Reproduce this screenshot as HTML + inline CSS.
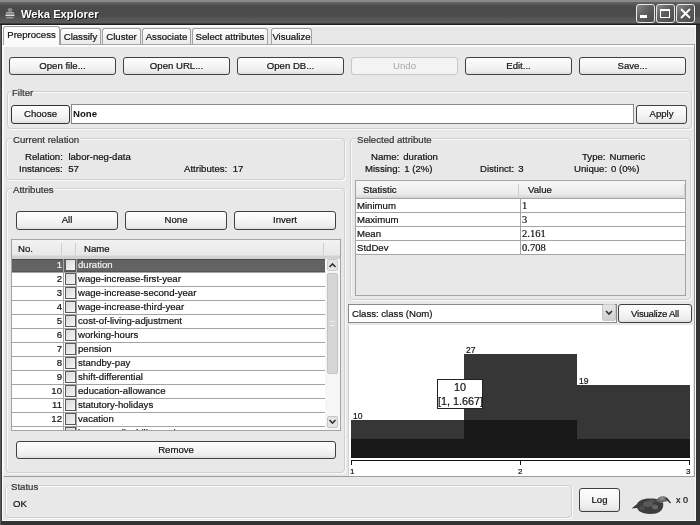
<!DOCTYPE html>
<html><head><meta charset="utf-8"><style>
*{box-sizing:border-box;margin:0;padding:0}
html,body{width:700px;height:525px;overflow:hidden;background:#333}
body{position:relative;font-family:"Liberation Sans",sans-serif;font-size:9.6px;color:#111}
.a{position:absolute;white-space:nowrap}
.btn{position:absolute;border:1px solid #404040;border-radius:3px;background:linear-gradient(#fdfdfd 0,#f5f5f5 50%,#ebebeb 85%,#dedede 100%);text-align:center;line-height:16px;white-space:nowrap}
.btn.dis{border-color:#c8c8c8;color:#a9a9a9;background:#f3f3f3}
.grp{position:absolute;border:1px solid #cfcfcf;border-radius:4px;box-shadow:inset 1px 1px 0 #fafafa,1px 1px 0 #fafafa}
.glbl{position:absolute;background:#e8e8e8;padding:0 1px;color:#333;line-height:11px;white-space:nowrap}
.tab{position:absolute;top:28px;height:16px;border:1px solid #a0a0a0;border-bottom:none;border-radius:3px 3px 0 0;background:linear-gradient(#fdfdfd,#ebebeb);text-align:center;line-height:16px;white-space:nowrap}
.t{-webkit-text-stroke:0.2px currentColor}
</style></head><body><div id="root" style="position:absolute;left:0;top:0;width:700px;height:525px;filter:grayscale(1)">
<div class="a" style="left:0;top:0;width:700px;height:25px;background:linear-gradient(#8a8a8a 0,#8a8a8a 1.5px,#626262 2.5px,#5a5a5a 4px,#4b4b4b 6px,#4b4b4b 15px,#565656 19px,#5c5c5c 23px,#1e1e1e 24px)"></div>
<svg class="a" style="left:5px;top:7px" width="10" height="13"><ellipse cx="5" cy="3" rx="2.5" ry="2" fill="#888"/><rect x="1" y="5.2" width="8" height="1.4" fill="#bbb"/><rect x="0.5" y="7.5" width="9" height="1.6" fill="#ddd"/><rect x="1.5" y="10" width="7" height="1.4" fill="#999"/></svg>
<div class="a" style="left:21px;top:6.5px;font-weight:bold;font-size:11.2px;color:#fff;text-shadow:1px 1px 0 #1a1a1a;line-height:14px">Weka Explorer</div>
<div class="a" style="left:636px;top:4px;width:19px;height:19px;border:1px solid #e8e8e8;border-radius:3px;background:linear-gradient(135deg,#8a8a8a 0,#5e5e5e 45%,#4a4a4a 100%)"></div>
<div class="a" style="left:656px;top:4px;width:19px;height:19px;border:1px solid #e8e8e8;border-radius:3px;background:linear-gradient(135deg,#8a8a8a 0,#5e5e5e 45%,#4a4a4a 100%)"></div>
<div class="a" style="left:676px;top:4px;width:19px;height:19px;border:1px solid #e8e8e8;border-radius:3px;background:linear-gradient(135deg,#8a8a8a 0,#5e5e5e 45%,#4a4a4a 100%)"></div>
<div class="a" style="left:640px;top:15px;width:7px;height:3px;background:#fff"></div>
<div class="a" style="left:660px;top:9px;width:10px;height:9px;border:1.5px solid #fff;border-top-width:2.5px"></div>
<svg class="a" style="left:680px;top:8px" width="11" height="11"><path d="M1 1L10 10M10 1L1 10" stroke="#fff" stroke-width="1.8"/></svg>
<div class="a" style="left:0;top:25px;width:2px;height:500px;background:linear-gradient(90deg,#585858 0,#585858 1px,#383838 1px)"></div>
<div class="a" style="left:2px;top:25px;width:694px;height:496px;background:#e8e8e8;border-left:1px solid #fafafa;border-right:1px solid #fafafa;border-bottom:1px solid #fafafa"></div>
<div class="a" style="left:2px;top:25px;width:694px;height:2px;background:#fafafa"></div>
<div class="a" style="left:3px;top:44px;width:692px;height:433px;border:1px solid #9c9c9c;border-left-color:#f8f8f8;border-top-color:#a8a8a8;background:#e8e8e8;box-shadow:inset 0 2px 0 #fafafa"></div>
<div class="tab t" style="left:60px;width:41px">Classify</div>
<div class="tab t" style="left:102px;width:39px">Cluster</div>
<div class="tab t" style="left:142px;width:49px">Associate</div>
<div class="tab t" style="left:192px;width:76px">Select attributes</div>
<div class="tab t" style="left:271px;width:41px">Visualize</div>
<div class="tab t" style="left:3px;top:26px;width:57px;height:19px;background:#fbfbfb;border-color:#a0a0a0;line-height:16px">Preprocess</div>
<div class="btn t" style="left:9px;top:57px;width:107px;height:18px">Open file...</div>
<div class="btn t" style="left:123px;top:57px;width:107px;height:18px">Open URL...</div>
<div class="btn t" style="left:237px;top:57px;width:107px;height:18px">Open DB...</div>
<div class="btn dis" style="left:351px;top:57px;width:107px;height:18px">Undo</div>
<div class="btn t" style="left:465px;top:57px;width:107px;height:18px">Edit...</div>
<div class="btn t" style="left:579px;top:57px;width:107px;height:18px">Save...</div>
<div class="grp" style="left:7px;top:91px;width:685px;height:38px"></div>
<div class="glbl t" style="left:11px;top:87px">Filter</div>
<div class="btn t" style="left:11px;top:105px;width:59px;height:19px;border-color:#333;line-height:16px">Choose</div>
<div class="a" style="left:71px;top:104px;width:563px;height:20px;background:#fff;border:1px solid #8a8a8a;border-bottom-color:#777;font-weight:bold;padding-left:1px;line-height:18px">None</div>
<div class="btn t" style="left:636px;top:105px;width:51px;height:19px;line-height:16px">Apply</div>
<div class="grp" style="left:6px;top:138px;width:339px;height:42px"></div>
<div class="glbl t" style="left:12px;top:134px">Current relation</div>
<div class="a t" style="left:25px;top:151px">Relation:<span style="display:inline-block;width:5.5px"></span>labor-neg-data</div>
<div class="a t" style="left:19px;top:163px">Instances:<span style="display:inline-block;width:5.5px"></span>57</div>
<div class="a t" style="left:184px;top:163px">Attributes:<span style="display:inline-block;width:5.5px"></span>17</div>
<div class="grp" style="left:6px;top:188px;width:339px;height:285px"></div>
<div class="glbl t" style="left:12px;top:184px">Attributes</div>
<div class="btn t" style="left:16px;top:211px;width:102px;height:19px;line-height:16px">All</div>
<div class="btn t" style="left:125px;top:211px;width:102px;height:19px;line-height:16px">None</div>
<div class="btn t" style="left:234px;top:211px;width:102px;height:19px;line-height:16px">Invert</div>
<div class="a" style="left:11px;top:239px;width:330px;height:192px;border:1px solid #a4a4a4;background:#fff;overflow:hidden"><div class="a" style="left:0;top:0;width:328px;height:19px;background:linear-gradient(#f2f2f2 0,#e8e8e8 15px,#d2d2d2 16px,#d2d2d2 19px)"></div><div class="a" style="left:49px;top:3px;width:1px;height:12px;background:#cfcfcf"></div><div class="a" style="left:63px;top:3px;width:1px;height:12px;background:#cfcfcf"></div><div class="a" style="left:311px;top:3px;width:1px;height:12px;background:#cfcfcf"></div><div class="a t" style="left:6px;top:3px">No.</div><div class="a t" style="left:72px;top:3px">Name</div><div class="a" style="left:0;top:19px;width:313px;height:14px;background:#636363;border-bottom:1px solid #a4a4a4"></div><div class="a" style="left:0;top:19px;width:313px;height:1px;background:#4a4a4a"></div><div class="a" style="left:0;top:31px;width:313px;height:1px;background:#555"></div><div class="a" style="left:51px;top:19px;width:1px;height:14px;background:#a4a4a4"></div><div class="a" style="left:64px;top:19px;width:1px;height:14px;background:#a4a4a4"></div><div class="a t" style="left:20px;top:18px;width:30px;text-align:right;color:#f2f2f2;line-height:13px">1</div><div class="a" style="left:53px;top:19px;width:11px;height:12px;border:1px solid #5a5a5a;background:linear-gradient(135deg,#d8d8d8,#f6f6f6)"></div><div class="a t" style="left:66px;top:18px;color:#f2f2f2;line-height:13px">duration</div><div class="a" style="left:0;top:33px;width:313px;height:14px;background:#fff;border-bottom:1px solid #a4a4a4"></div><div class="a" style="left:51px;top:33px;width:1px;height:14px;background:#a4a4a4"></div><div class="a" style="left:64px;top:33px;width:1px;height:14px;background:#a4a4a4"></div><div class="a t" style="left:20px;top:32px;width:30px;text-align:right;color:#111;line-height:13px">2</div><div class="a" style="left:53px;top:33px;width:11px;height:12px;border:1px solid #5a5a5a;background:linear-gradient(135deg,#d8d8d8,#f6f6f6)"></div><div class="a t" style="left:66px;top:32px;color:#111;line-height:13px">wage-increase-first-year</div><div class="a" style="left:0;top:47px;width:313px;height:14px;background:#fff;border-bottom:1px solid #a4a4a4"></div><div class="a" style="left:51px;top:47px;width:1px;height:14px;background:#a4a4a4"></div><div class="a" style="left:64px;top:47px;width:1px;height:14px;background:#a4a4a4"></div><div class="a t" style="left:20px;top:46px;width:30px;text-align:right;color:#111;line-height:13px">3</div><div class="a" style="left:53px;top:47px;width:11px;height:12px;border:1px solid #5a5a5a;background:linear-gradient(135deg,#d8d8d8,#f6f6f6)"></div><div class="a t" style="left:66px;top:46px;color:#111;line-height:13px">wage-increase-second-year</div><div class="a" style="left:0;top:61px;width:313px;height:14px;background:#fff;border-bottom:1px solid #a4a4a4"></div><div class="a" style="left:51px;top:61px;width:1px;height:14px;background:#a4a4a4"></div><div class="a" style="left:64px;top:61px;width:1px;height:14px;background:#a4a4a4"></div><div class="a t" style="left:20px;top:60px;width:30px;text-align:right;color:#111;line-height:13px">4</div><div class="a" style="left:53px;top:61px;width:11px;height:12px;border:1px solid #5a5a5a;background:linear-gradient(135deg,#d8d8d8,#f6f6f6)"></div><div class="a t" style="left:66px;top:60px;color:#111;line-height:13px">wage-increase-third-year</div><div class="a" style="left:0;top:75px;width:313px;height:14px;background:#fff;border-bottom:1px solid #a4a4a4"></div><div class="a" style="left:51px;top:75px;width:1px;height:14px;background:#a4a4a4"></div><div class="a" style="left:64px;top:75px;width:1px;height:14px;background:#a4a4a4"></div><div class="a t" style="left:20px;top:74px;width:30px;text-align:right;color:#111;line-height:13px">5</div><div class="a" style="left:53px;top:75px;width:11px;height:12px;border:1px solid #5a5a5a;background:linear-gradient(135deg,#d8d8d8,#f6f6f6)"></div><div class="a t" style="left:66px;top:74px;color:#111;line-height:13px">cost-of-living-adjustment</div><div class="a" style="left:0;top:89px;width:313px;height:14px;background:#fff;border-bottom:1px solid #a4a4a4"></div><div class="a" style="left:51px;top:89px;width:1px;height:14px;background:#a4a4a4"></div><div class="a" style="left:64px;top:89px;width:1px;height:14px;background:#a4a4a4"></div><div class="a t" style="left:20px;top:88px;width:30px;text-align:right;color:#111;line-height:13px">6</div><div class="a" style="left:53px;top:89px;width:11px;height:12px;border:1px solid #5a5a5a;background:linear-gradient(135deg,#d8d8d8,#f6f6f6)"></div><div class="a t" style="left:66px;top:88px;color:#111;line-height:13px">working-hours</div><div class="a" style="left:0;top:103px;width:313px;height:14px;background:#fff;border-bottom:1px solid #a4a4a4"></div><div class="a" style="left:51px;top:103px;width:1px;height:14px;background:#a4a4a4"></div><div class="a" style="left:64px;top:103px;width:1px;height:14px;background:#a4a4a4"></div><div class="a t" style="left:20px;top:102px;width:30px;text-align:right;color:#111;line-height:13px">7</div><div class="a" style="left:53px;top:103px;width:11px;height:12px;border:1px solid #5a5a5a;background:linear-gradient(135deg,#d8d8d8,#f6f6f6)"></div><div class="a t" style="left:66px;top:102px;color:#111;line-height:13px">pension</div><div class="a" style="left:0;top:117px;width:313px;height:14px;background:#fff;border-bottom:1px solid #a4a4a4"></div><div class="a" style="left:51px;top:117px;width:1px;height:14px;background:#a4a4a4"></div><div class="a" style="left:64px;top:117px;width:1px;height:14px;background:#a4a4a4"></div><div class="a t" style="left:20px;top:116px;width:30px;text-align:right;color:#111;line-height:13px">8</div><div class="a" style="left:53px;top:117px;width:11px;height:12px;border:1px solid #5a5a5a;background:linear-gradient(135deg,#d8d8d8,#f6f6f6)"></div><div class="a t" style="left:66px;top:116px;color:#111;line-height:13px">standby-pay</div><div class="a" style="left:0;top:131px;width:313px;height:14px;background:#fff;border-bottom:1px solid #a4a4a4"></div><div class="a" style="left:51px;top:131px;width:1px;height:14px;background:#a4a4a4"></div><div class="a" style="left:64px;top:131px;width:1px;height:14px;background:#a4a4a4"></div><div class="a t" style="left:20px;top:130px;width:30px;text-align:right;color:#111;line-height:13px">9</div><div class="a" style="left:53px;top:131px;width:11px;height:12px;border:1px solid #5a5a5a;background:linear-gradient(135deg,#d8d8d8,#f6f6f6)"></div><div class="a t" style="left:66px;top:130px;color:#111;line-height:13px">shift-differential</div><div class="a" style="left:0;top:145px;width:313px;height:14px;background:#fff;border-bottom:1px solid #a4a4a4"></div><div class="a" style="left:51px;top:145px;width:1px;height:14px;background:#a4a4a4"></div><div class="a" style="left:64px;top:145px;width:1px;height:14px;background:#a4a4a4"></div><div class="a t" style="left:20px;top:144px;width:30px;text-align:right;color:#111;line-height:13px">10</div><div class="a" style="left:53px;top:145px;width:11px;height:12px;border:1px solid #5a5a5a;background:linear-gradient(135deg,#d8d8d8,#f6f6f6)"></div><div class="a t" style="left:66px;top:144px;color:#111;line-height:13px">education-allowance</div><div class="a" style="left:0;top:159px;width:313px;height:14px;background:#fff;border-bottom:1px solid #a4a4a4"></div><div class="a" style="left:51px;top:159px;width:1px;height:14px;background:#a4a4a4"></div><div class="a" style="left:64px;top:159px;width:1px;height:14px;background:#a4a4a4"></div><div class="a t" style="left:20px;top:158px;width:30px;text-align:right;color:#111;line-height:13px">11</div><div class="a" style="left:53px;top:159px;width:11px;height:12px;border:1px solid #5a5a5a;background:linear-gradient(135deg,#d8d8d8,#f6f6f6)"></div><div class="a t" style="left:66px;top:158px;color:#111;line-height:13px">statutory-holidays</div><div class="a" style="left:0;top:173px;width:313px;height:14px;background:#fff;border-bottom:1px solid #a4a4a4"></div><div class="a" style="left:51px;top:173px;width:1px;height:14px;background:#a4a4a4"></div><div class="a" style="left:64px;top:173px;width:1px;height:14px;background:#a4a4a4"></div><div class="a t" style="left:20px;top:172px;width:30px;text-align:right;color:#111;line-height:13px">12</div><div class="a" style="left:53px;top:173px;width:11px;height:12px;border:1px solid #5a5a5a;background:linear-gradient(135deg,#d8d8d8,#f6f6f6)"></div><div class="a t" style="left:66px;top:172px;color:#111;line-height:13px">vacation</div><div class="a" style="left:0;top:187px;width:313px;height:14px;background:#fff;border-bottom:1px solid #a4a4a4"></div><div class="a" style="left:51px;top:187px;width:1px;height:14px;background:#a4a4a4"></div><div class="a" style="left:64px;top:187px;width:1px;height:14px;background:#a4a4a4"></div><div class="a t" style="left:20px;top:186px;width:30px;text-align:right;color:#111;line-height:13px">13</div><div class="a" style="left:53px;top:187px;width:11px;height:12px;border:1px solid #5a5a5a;background:linear-gradient(135deg,#d8d8d8,#f6f6f6)"></div><div class="a t" style="left:66px;top:186px;color:#111;line-height:13px">longterm-disability-assistance</div><div class="a" style="left:313px;top:19px;width:15px;height:172px;background:#f6f6f6"></div><div class="a" style="left:315px;top:19px;width:11px;height:12px;border:1px solid #cccccc;border-radius:2px;background:#e4e4e4"></div><svg class="a" style="left:316px;top:21px" width="9" height="8"><path d="M1.5 6L4.5 3L7.5 6" stroke="#333" stroke-width="1.6" fill="none"/></svg><div class="a" style="left:315px;top:33px;width:11px;height:101px;border:1px solid #c4c4c4;border-radius:2px;background:#d6d6d6"></div><div class="a" style="left:318px;top:81px;width:5px;height:5px;border-top:1px solid #eee;border-bottom:1px solid #eee"></div><div class="a" style="left:315px;top:176px;width:11px;height:12px;border:1px solid #c4c4c4;border-radius:2px;background:#e4e4e4"></div><svg class="a" style="left:316px;top:178px" width="9" height="8"><path d="M1.5 2L4.5 5L7.5 2" stroke="#333" stroke-width="1.6" fill="none"/></svg></div>
<div class="btn t" style="left:16px;top:441px;width:320px;height:18px">Remove</div>
<div class="grp" style="left:350px;top:138px;width:341px;height:162px"></div>
<div class="glbl t" style="left:356px;top:134px">Selected attribute</div>
<div class="a t" style="left:371px;top:151px">Name:<span style="display:inline-block;width:4px"></span>duration</div>
<div class="a t" style="left:365px;top:163px">Missing:<span style="display:inline-block;width:4px"></span>1 (2%)</div>
<div class="a t" style="left:480px;top:163px">Distinct:<span style="display:inline-block;width:4px"></span>3</div>
<div class="a t" style="left:582px;top:151px">Type:<span style="display:inline-block;width:4px"></span>Numeric</div>
<div class="a t" style="left:574px;top:163px">Unique:<span style="display:inline-block;width:4px"></span>0 (0%)</div>
<div class="a" style="left:355px;top:180px;width:331px;height:116px;border:1px solid #a4a4a4;background:#e8e8e8;overflow:hidden"><div class="a" style="left:0;top:0;width:329px;height:17px;background:linear-gradient(#f6f6f6,#ececec 75%,#d4d4d4)"></div><div class="a" style="left:162px;top:3px;width:1px;height:12px;background:#cfcfcf"></div><div class="a" style="left:328px;top:3px;width:1px;height:12px;background:#cfcfcf"></div><div class="a t" style="left:7px;top:3px">Statistic</div><div class="a t" style="left:172px;top:3px">Value</div><div class="a" style="left:0;top:17px;width:329px;height:15px;background:#fff;border-top:1px solid #a4a4a4"></div><div class="a" style="left:164px;top:17px;width:1px;height:15px;background:#a4a4a4"></div><div class="a t" style="left:1px;top:19px;line-height:12px">Minimum</div><div class="a t" style="left:166px;top:19px;line-height:12px;font-family:'Liberation Serif',serif;font-size:10.5px">1</div><div class="a" style="left:0;top:31px;width:329px;height:15px;background:#fff;border-top:1px solid #a4a4a4"></div><div class="a" style="left:164px;top:31px;width:1px;height:15px;background:#a4a4a4"></div><div class="a t" style="left:1px;top:33px;line-height:12px">Maximum</div><div class="a t" style="left:166px;top:33px;line-height:12px;font-family:'Liberation Serif',serif;font-size:10.5px">3</div><div class="a" style="left:0;top:45px;width:329px;height:15px;background:#fff;border-top:1px solid #a4a4a4"></div><div class="a" style="left:164px;top:45px;width:1px;height:15px;background:#a4a4a4"></div><div class="a t" style="left:1px;top:47px;line-height:12px">Mean</div><div class="a t" style="left:166px;top:47px;line-height:12px;font-family:'Liberation Serif',serif;font-size:10.5px">2.161</div><div class="a" style="left:0;top:59px;width:329px;height:15px;background:#fff;border-top:1px solid #a4a4a4"></div><div class="a" style="left:164px;top:59px;width:1px;height:15px;background:#a4a4a4"></div><div class="a t" style="left:1px;top:61px;line-height:12px">StdDev</div><div class="a t" style="left:166px;top:61px;line-height:12px;font-family:'Liberation Serif',serif;font-size:10.5px">0.708</div><div class="a" style="left:0;top:73px;width:329px;height:1px;background:#a4a4a4"></div><div class="a" style="left:329px;top:17px;width:1px;height:57px;background:#a4a4a4"></div></div>
<div class="a t" style="left:348px;top:304px;width:269px;height:19px;background:#fff;border:1px solid #8a8a8a;padding-left:3px;line-height:17px">Class: class (Nom)</div>
<div class="a" style="left:602px;top:304px;width:14px;height:17px;border:1px solid #c8c8c8;border-radius:2px;background:linear-gradient(#e6e6e6,#d0d0d0)"></div>
<svg class="a" style="left:604px;top:308px" width="10" height="9"><path d="M2 3L5 6L8 3" stroke="#333" stroke-width="1.6" fill="none"/></svg>
<div class="btn t" style="left:618px;top:304px;width:74px;height:19px;line-height:17px" ><span style="letter-spacing:-0.25px">Visualize All</span></div>
<div class="a" style="left:348px;top:325px;width:345px;height:151px;background:#fff;border-left:1px solid #d0d0d0"></div>
<div class="a" style="left:351px;top:420px;width:113px;height:19px;background:#363636"></div>
<div class="a" style="left:351px;top:439px;width:113px;height:19px;background:#181818"></div>
<div class="a" style="left:464px;top:354px;width:113px;height:66px;background:#363636"></div>
<div class="a" style="left:464px;top:420px;width:113px;height:38px;background:#181818"></div>
<div class="a" style="left:577px;top:385px;width:113px;height:54px;background:#363636"></div>
<div class="a" style="left:577px;top:439px;width:113px;height:19px;background:#181818"></div>
<div class="a t" style="left:353px;top:411px;font-size:8.5px;line-height:10px">10</div>
<div class="a t" style="left:466px;top:345px;font-size:8.5px;line-height:10px">27</div>
<div class="a t" style="left:579px;top:376px;font-size:8.5px;line-height:10px">19</div>
<div class="a" style="left:351px;top:460px;width:339px;height:1px;background:#111"></div>
<div class="a" style="left:351px;top:460px;width:1px;height:5px;background:#111"></div>
<div class="a" style="left:520px;top:460px;width:1px;height:5px;background:#111"></div>
<div class="a" style="left:689px;top:460px;width:1px;height:5px;background:#111"></div>
<div class="a t" style="left:350px;top:467px;font-size:8px;line-height:9px">1</div>
<div class="a t" style="left:518px;top:467px;font-size:8px;line-height:9px">2</div>
<div class="a t" style="left:686px;top:467px;font-size:8px;line-height:9px">3</div>
<div class="a t" style="left:437px;top:379px;width:46px;height:30px;background:#fff;border:1px solid #222;text-align:center;font-size:10.8px;line-height:14px;padding-top:0px">10<br>[1, 1.667]</div>
<div class="grp" style="left:5px;top:485px;width:567px;height:33px"></div>
<div class="glbl t" style="left:10px;top:481px">Status</div>
<div class="a t" style="left:13px;top:498px">OK</div>
<div class="btn t" style="left:579px;top:488px;width:41px;height:24px;line-height:22px">Log</div>
<svg class="a" style="left:628px;top:490px" width="46" height="28"><path d="M3.5 18.5 L9 14 C11 10 16 8.5 22 8.5 C27 8.5 30 9 33 10 L35 13 C36 17 34 22 28 23.5 C22 24.5 15 24 11 21 L9 18 Z" fill="#3c3c3c"/><ellipse cx="20" cy="14" rx="5" ry="3" fill="#5a5a5a"/><ellipse cx="27" cy="17" rx="3" ry="2.5" fill="#666"/><ellipse cx="14" cy="18" rx="3" ry="2" fill="#4e4e4e"/><ellipse cx="24" cy="11" rx="3" ry="1.5" fill="#555"/><path d="M28 11 C30 6.5 35 5.5 38 7 C40 8 41 10 42.5 13 L40 11 C38 11.5 36 12 33 13 Z" fill="#6a6a6a"/><ellipse cx="34" cy="8.5" rx="2.5" ry="1.5" fill="#8a8a8a"/><path d="M38 8 L42.5 13" stroke="#333" stroke-width="1.2"/></svg>
<div class="a t" style="left:676px;top:495px;font-size:9px">x 0</div>
</div></body></html>
